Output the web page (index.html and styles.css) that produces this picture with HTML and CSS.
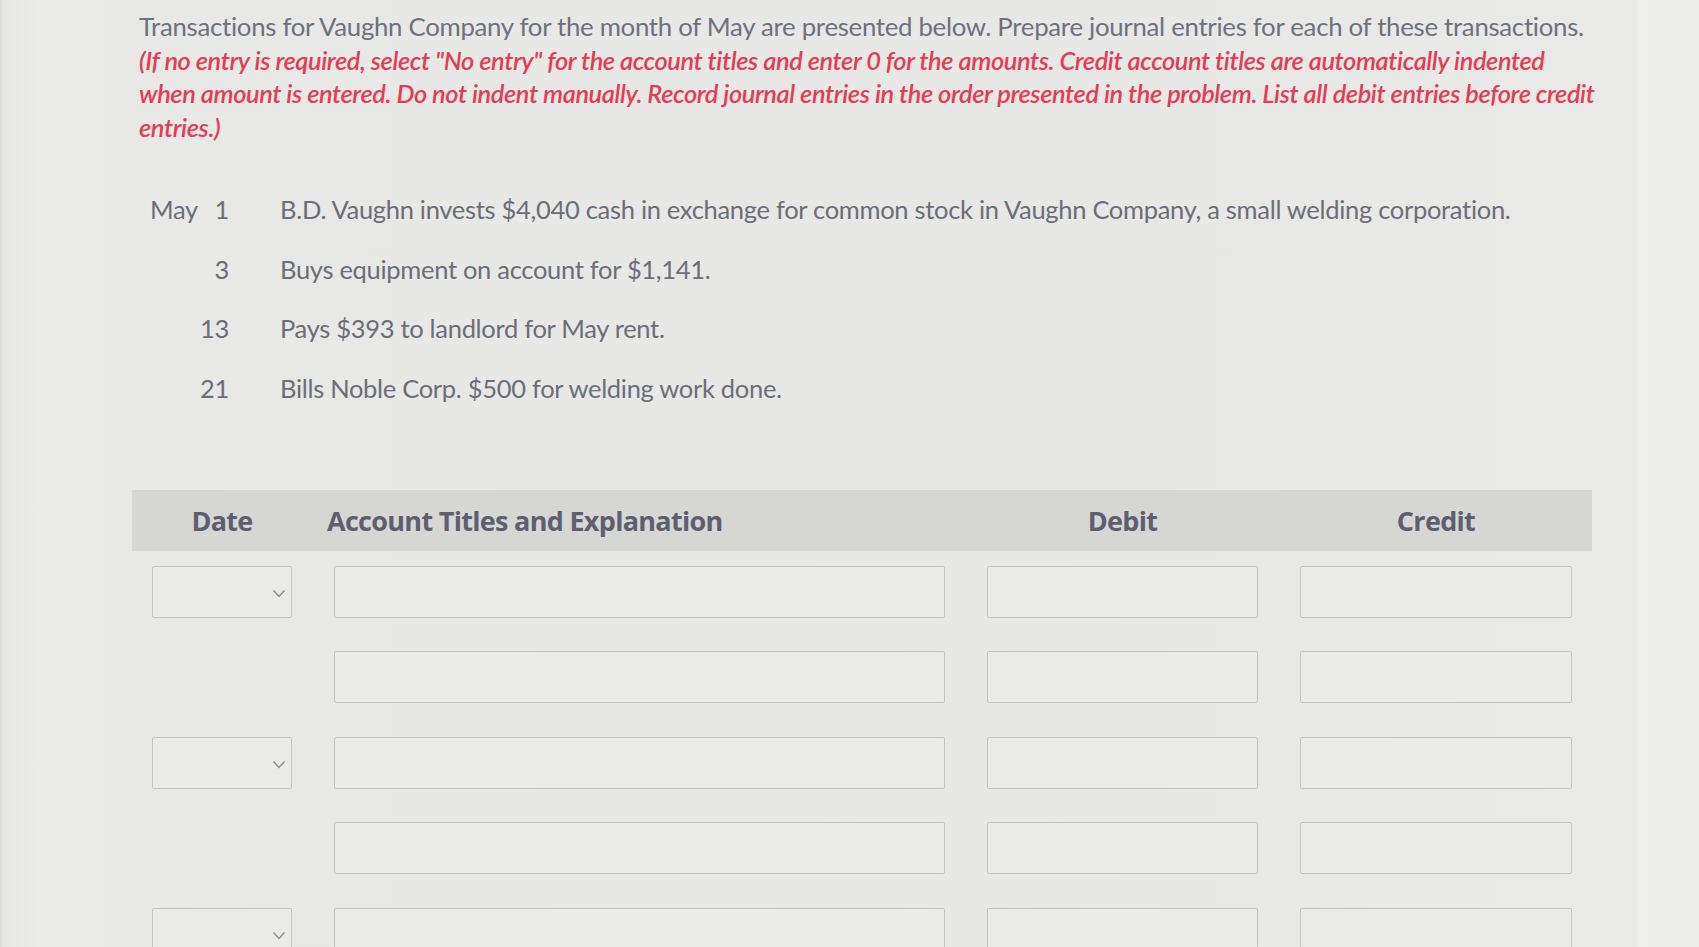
FILE: index.html
```html
<!DOCTYPE html>
<html>
<head>
<meta charset="utf-8">
<link rel="stylesheet" href="styles.css">
</head>
<body>
<div class="screen">
  <div class="content">
    <div class="intro">
      <span class="line">Transactions for Vaughn Company for the month of May are presented below. Prepare journal entries for each of these transactions.</span>
      <span class="line note">(If no entry is required, select "No entry" for the account titles and enter 0 for the amounts. Credit account titles are automatically indented</span>
      <span class="line note">when amount is entered. Do not indent manually. Record journal entries in the order presented in the problem. List all debit entries before credit</span>
      <span class="line note">entries.)</span>
    </div>

    <div class="txns">
      <div class="tdate"><span class="mon">May</span><span>1</span></div>
      <div class="tdesc">B.D. Vaughn invests $4,040 cash in exchange for common stock in Vaughn Company, a small welding corporation.</div>
      <div class="tdate"><span>3</span></div>
      <div class="tdesc">Buys equipment on account for $1,141.</div>
      <div class="tdate"><span>13</span></div>
      <div class="tdesc">Pays $393 to landlord for May rent.</div>
      <div class="tdate"><span>21</span></div>
      <div class="tdesc">Bills Noble Corp. $500 for welding work done.</div>
    </div>

    <div class="journal">
      <div class="jhead">
        <div class="h-date">Date</div>
        <div class="h-acct">Account Titles and Explanation</div>
        <div class="h-num">Debit</div>
        <div class="h-num">Credit</div>
      </div>
      <div class="jrows">
        <div class="sel"><svg class="chev" viewBox="0 0 14 9" width="14" height="9"><path d="M1.5 1.5 L7 7.5 L12.5 1.5" fill="none" stroke="#8e8e8e" stroke-width="1.5"/></svg></div>
        <div class="box"></div><div class="box"></div><div class="box"></div>

        <div class="blank"></div>
        <div class="box"></div><div class="box"></div><div class="box"></div>

        <div class="sel"><svg class="chev" viewBox="0 0 14 9" width="14" height="9"><path d="M1.5 1.5 L7 7.5 L12.5 1.5" fill="none" stroke="#8e8e8e" stroke-width="1.5"/></svg></div>
        <div class="box"></div><div class="box"></div><div class="box"></div>

        <div class="blank"></div>
        <div class="box"></div><div class="box"></div><div class="box"></div>

        <div class="sel"><svg class="chev" viewBox="0 0 14 9" width="14" height="9"><path d="M1.5 1.5 L7 7.5 L12.5 1.5" fill="none" stroke="#8e8e8e" stroke-width="1.5"/></svg></div>
        <div class="box"></div><div class="box"></div><div class="box"></div>
      </div>
    </div>
  </div>
</div>
</body>
</html>
```

FILE: styles.css
```css
html, body {
  margin: 0;
  padding: 0;
}
body {
  width: 1699px;
  height: 947px;
  overflow: hidden;
  background: #e7e7e5;
}
.screen {
  width: 1699px;
  height: 947px;
  background: linear-gradient(to right, #d9d9d7 0px, #e6e6e4 3px, #ebebe9 40px, #e8e8e6 120px, #e7e7e5 1000px, #e9e9e7 1636px, #eeeeec 1638px, #ededeb 1699px);
  overflow: hidden;
}
.content {
  padding: 10px 0 0 139px;
  width: 1460px;
}
.intro {
  font-family: Lato, "Open Sans", sans-serif;
  font-size: 25.8px;
  line-height: 33.7px;
  color: #6e717e;
  letter-spacing: -0.3px;
}
.line {
  display: block;
  white-space: nowrap;
}
.note {
  color: #e23d57;
  font-style: italic;
  font-weight: 600;
  font-size: 25.4px;
  letter-spacing: -0.4px;
}
.txns {
  margin-top: 35px;
  display: grid;
  grid-template-columns: 79px 1fr;
  column-gap: 51px;
  font-family: Lato, "Open Sans", sans-serif;
  font-size: 25.5px;
  color: #6b6e78;
  line-height: 59.7px;
  letter-spacing: -0.3px;
  margin-left: 11px;
}
.tdate {
  display: flex;
  justify-content: space-between;
}
.tdate span:only-child {
  margin-left: auto;
}
.journal {
  margin-top: 71px;
  margin-left: -7px;
  width: 1460px;
}
.jhead {
  display: grid;
  grid-template-columns: 140px 611px 271px 272px;
  column-gap: 42px;
  padding: 0 20px;
  height: 61px;
  align-items: center;
  background: #d6d6d5;
  font-family: "Open Sans", sans-serif;
  font-weight: 700;
  font-size: 27px;
  color: #5e5f6e;
  letter-spacing: -0.7px;
}
.h-date, .h-num {
  text-align: center;
}
.h-acct {
  margin-left: -7px;
}
.jrows {
  display: grid;
  grid-template-columns: 140px 611px 271px 272px;
  grid-auto-rows: 52px;
  column-gap: 42px;
  row-gap: 33.5px;
  padding: 15px 20px 0;
}
.box, .sel {
  box-sizing: border-box;
  border: 1.5px solid #c3c3c2;
  border-radius: 2px;
  background: #eaeae8;
}
.sel {
  display: flex;
  align-items: center;
  justify-content: flex-end;
  padding-right: 5px;
  padding-top: 3px;
}
.chev {
  display: block;
}
```
